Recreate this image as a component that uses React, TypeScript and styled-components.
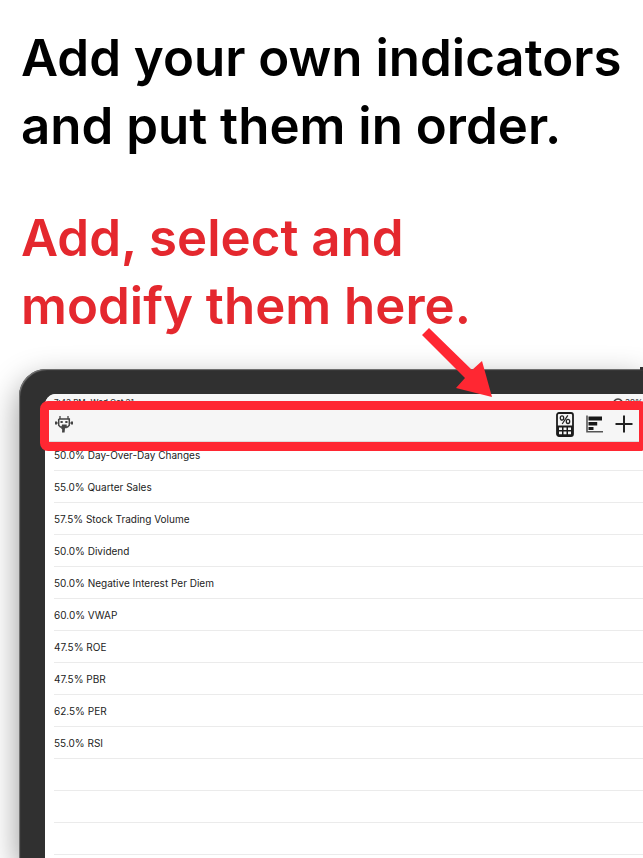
import React from "react";
import styled, { createGlobalStyle } from "styled-components";

const RED = "#ff2732";
const SANS = 'Inter, "Liberation Sans", sans-serif';

const GlobalStyle = createGlobalStyle`
  *, *::before, *::after { box-sizing: border-box; }
  body { margin: 0; background: #fff; font-family: ${SANS}; }
`;

const Page = styled.main`
  display: flex;
  flex-direction: column;
  min-height: 100vh;
  overflow: hidden;
`;

const Copy = styled.header`
  display: flex;
  flex-direction: column;
  gap: 44px;
  padding: 24px 0 29px 21px;
`;

const Headline = styled.h1<{ $accent?: boolean }>`
  position: relative;
  z-index: 1;
  margin: 0;
  font-size: 51px;
  line-height: 68px;
  font-weight: 600;
  white-space: nowrap;
  color: ${(p) => (p.$accent ? "#e4282e" : "#000")};
`;

const Line = styled.span`
  display: block;
`;

const Device = styled.section`
  position: relative;
  flex: 1;
  display: flex;
  flex-direction: column;
  margin-left: 19px;
  padding: 25px 0 0 26px;
  background: #303030;
  border-radius: 27px 0 0 0;
  box-shadow: inset 1px 1px 1px #777, 0 12px 32px rgba(0, 0, 0, 0.42);
`;

const PowerButton = styled.span`
  position: absolute;
  top: -2px;
  right: 0;
  width: 3px;
  height: 3px;
  background: #303030;
`;

const Screen = styled.div`
  flex: 1;
  background: #fff;
  border-radius: 11px 0 0 0;
`;

const StatusBar = styled.div`
  display: flex;
  justify-content: space-between;
  height: 16px;
  padding: 2px 0 0 9px;
  font-size: 8px;
  line-height: 12px;
  font-weight: 500;
  color: #333;
  background: #f7f7f7;
  border-radius: 11px 0 0 0;
  white-space: nowrap;
  overflow: hidden;
`;

const StatusGroup = styled.span`
  display: flex;
  gap: 5px;
`;

const StatusEnd = styled(StatusGroup)`
  gap: 2px;
`;

const Toolbar = styled.div`
  position: relative;
  z-index: 1;
  display: flex;
  align-items: center;
  justify-content: space-between;
  height: 32px;
  padding: 0 10px 3px 10px;
  background: #f6f6f6;
  border-bottom: 1px solid #dcdcdc;
`;

const Highlight = styled.div`
  position: absolute;
  inset: -9px -5px -10px -5px;
  border: 9px solid ${RED};
  border-radius: 8px;
  pointer-events: none;
`;

const Actions = styled.div`
  display: flex;
  align-items: center;
  gap: 12px;
`;

const IconButton = styled.button`
  display: flex;
  padding: 0;
  border: 0;
  background: none;
  color: #222;
  cursor: pointer;
`;

const List = styled.ul`
  margin: -3px 0 0;
  padding: 0 0 0 9px;
  list-style: none;
`;

const Row = styled.li`
  height: 32px;
  border-bottom: 1px solid #ebebeb;
  font-size: 10px;
  line-height: 32px;
  color: #222;
  white-space: nowrap;
`;

const Arrow = styled.svg`
  position: absolute;
  z-index: 2;
  top: -41px;
  left: 403px;
`;

const indicators = [
  "50.0% Day-Over-Day Changes",
  "55.0% Quarter Sales",
  "57.5% Stock Trading Volume",
  "50.0% Dividend",
  "50.0% Negative Interest Per Diem",
  "60.0% VWAP",
  "47.5% ROE",
  "47.5% PBR",
  "62.5% PER",
  "55.0% RSI",
  "",
  "",
  "",
];

const RobotIcon = () => (
  <svg width="18" height="18" viewBox="0 0 18 18" fill="none" stroke="#444" strokeWidth="1.5">
    <path d="M5 1v3M13 1v3" stroke="#777" strokeWidth="1.8" />
    <path d="M3.7 4h10.6v6.2L12.6 12H11M7 12H5.4L3.7 10.2V4" />
    <path d="M1 6.5v3M17 6.5v3" strokeWidth="2" />
    <path d="M1 8h2.5M14.5 8H17" strokeWidth="1" />
    <path d="M5.5 7h2.2M10.3 7h2.2" strokeWidth="1.8" />
    <path d="M7 9.6h4.7v3.6H10L9.6 17.4H7l.2-2.8-1-1z" fill="#444" stroke="none" />
  </svg>
);

const CalculatorIcon = () => (
  <svg width="18" height="25" viewBox="0 0 18 25" fill="none">
    <rect x="1" y="1" width="16" height="23" rx="2" stroke="#1c1c1c" strokeWidth="1.8" />
    <path d="M1 13.5h16V22a2 2 0 0 1-2 2H3a2 2 0 0 1-2-2z" fill="#1c1c1c" />
    <path d="M3 15.4h3v2.6H3zM7.5 15.4h3v2.6h-3zM12 15.4h3v2.6h-3zM3 19.6h3v2.6H3zM7.5 19.6h3v2.6h-3zM12 19.6h3v2.6h-3z" fill="#f6f6f6" />
    <ellipse cx="6" cy="6" rx="1.7" ry="2.1" stroke="#222" strokeWidth="1.3" />
    <ellipse cx="12" cy="9.4" rx="1.7" ry="2.1" stroke="#222" strokeWidth="1.3" />
    <path d="M11.8 3.4 6.2 12" stroke="#222" strokeWidth="1.2" />
  </svg>
);

const ChartIcon = () => (
  <svg width="17" height="18" viewBox="0 0 17 18" fill="none">
    <path d="M1 0.5V16.8H17" stroke="#555" strokeWidth="1.6" />
    <path d="M2.5 1.6H16v4H2.5zM2.5 7h8.7v3.6H2.5zM2.5 12h5v3h-5z" fill="#181818" />
  </svg>
);

const PlusIcon = () => (
  <svg width="18" height="18" viewBox="0 0 18 18" stroke="#222" strokeWidth="2">
    <path d="M9 0.5v17M0.5 9h17" />
  </svg>
);

const WifiIcon = () => (
  <svg width="10" height="10" viewBox="0 0 10 10" fill="none" stroke="#444" strokeWidth="1.5">
    <path d="M1 5Q5 1 9 5M3 7.5q2-2 4 0" />
  </svg>
);

export default function App() {
  return (
    <>
      <GlobalStyle />
      <Page>
        <Copy>
          <Headline>
            <Line>Add your own indicators</Line>
            <Line>and put them in order.</Line>
          </Headline>
          <Headline as="h2" $accent>
            <Line>Add, select and</Line>
            <Line>modify them here.</Line>
          </Headline>
        </Copy>
        <Device>
          <PowerButton />
          <Screen>
            <StatusBar>
              <StatusGroup>
                <span>7:43 PM</span>
                <span>Wed Oct 21</span>
              </StatusGroup>
              <StatusEnd>
                <WifiIcon />
                <span>39%</span>
              </StatusEnd>
            </StatusBar>
            <Toolbar>
              <IconButton aria-label="Assistant">
                <RobotIcon />
              </IconButton>
              <Actions>
                <IconButton aria-label="Calculate percentage">
                  <CalculatorIcon />
                </IconButton>
                <IconButton aria-label="Sort by value">
                  <ChartIcon />
                </IconButton>
                <IconButton aria-label="Add indicator">
                  <PlusIcon />
                </IconButton>
              </Actions>
              <Highlight />
            </Toolbar>
            <List>
              {indicators.map((label, i) => (
                <Row key={i}>{label}</Row>
              ))}
            </List>
          </Screen>
          <Arrow width="72" height="72" viewBox="0 0 72 72" fill={RED} aria-hidden="true">
            <path d="M0 7 7 0 50 42 60 33 70 69 34 60 43 50Z" />
          </Arrow>
        </Device>
      </Page>
    </>
  );
}
